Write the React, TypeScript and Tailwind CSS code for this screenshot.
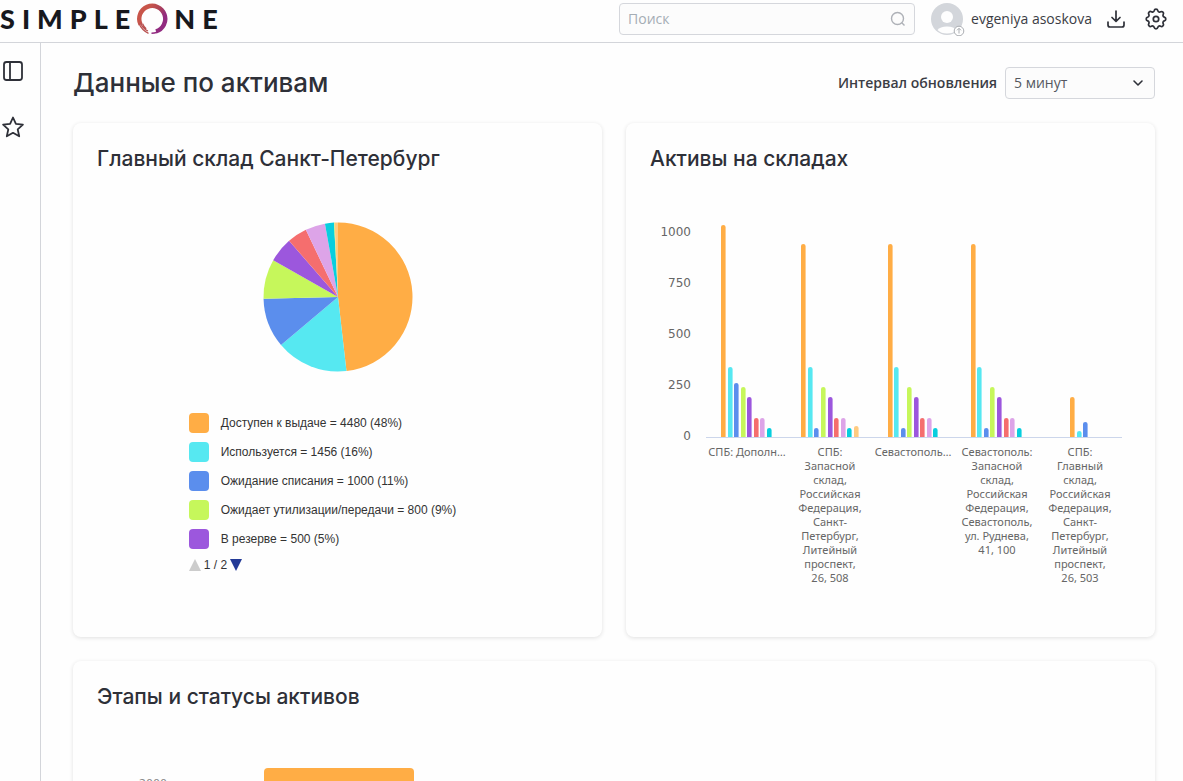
import React from "react";

const ORANGE = "#ffad45";
const CYAN = "#56e8f1";
const BLUE = "#5b8eed";
const LIME = "#c6f75b";
const PURPLE = "#9c57dd";
const RED = "#f56e6e";
const PINK = "#dda4e8";
const TEAL = "#08cede";
const PEACH = "#ffcb80";

const SERIES = [ORANGE, CYAN, BLUE, LIME, PURPLE, RED, PINK, TEAL, PEACH];

const SLICES = [
  { value: 4480, color: ORANGE },
  { value: 1456, color: CYAN },
  { value: 1000, color: BLUE },
  { value: 800, color: LIME },
  { value: 500, color: PURPLE },
  { value: 400, color: RED },
  { value: 400, color: PINK },
  { value: 180, color: TEAL },
  { value: 12, color: LIME },
  { value: 68, color: PEACH },
];

const LEGEND = [
  { text: "Доступен к выдаче = 4480 (48%)", swatch: "bg-[#ffad45]" },
  { text: "Используется = 1456 (16%)", swatch: "bg-[#56e8f1]" },
  { text: "Ожидание списания = 1000 (11%)", swatch: "bg-[#5b8eed]" },
  { text: "Ожидает утилизации/передачи = 800 (9%)", swatch: "bg-[#c6f75b]" },
  { text: "В резерве = 500 (5%)", swatch: "bg-[#9c57dd]" },
];

// Bar x positions and heights are in chart units; the baseline is at y = 253.
const GROUPS = [
  { xs: [71, 78, 84, 91, 97, 104, 110, 117], hs: [212, 70, 54, 50, 40, 19, 19, 9], labelX: 97, lines: ["СПБ: Дополн…"] },
  {
    xs: [151, 158, 164, 171, 178, 184, 191, 197, 204],
    hs: [193, 70, 9, 50, 40, 19, 19, 9, 11],
    labelX: 180,
    lines: ["СПБ:", "Запасной", "склад,", "Российская", "Федерация,", "Санкт-", "Петербург,", "Литейный", "проспект,", "26, 508"],
  },
  { xs: [238, 244, 251, 257, 264, 270, 277, 283], hs: [193, 70, 9, 50, 40, 19, 19, 9], labelX: 263, lines: ["Севастополь…"] },
  {
    xs: [321, 327, 334, 340, 347, 354, 360, 367],
    hs: [193, 70, 9, 50, 40, 19, 19, 9],
    labelX: 347,
    lines: ["Севастополь:", "Запасной", "склад,", "Российская", "Федерация,", "Севастополь,", "ул. Руднева,", "41, 100"],
  },
  {
    xs: [420, 427, 433],
    hs: [40, 6, 15],
    labelX: 430,
    lines: ["СПБ:", "Главный", "склад,", "Российская", "Федерация,", "Санкт-", "Петербург,", "Литейный", "проспект,", "26, 503"],
  },
];

const TICKS = [
  { text: "1000", y: 52 },
  { text: "750", y: 103 },
  { text: "500", y: 154 },
  { text: "250", y: 205 },
  { text: "0", y: 256 },
];

function Pie() {
  const total = SLICES.reduce((sum, s) => sum + s.value, 0);
  const point = (v: number) => {
    const a = (v / total) * Math.PI * 2;
    return `${75 + 74.5 * Math.sin(a)} ${75 - 74.5 * Math.cos(a)}`;
  };
  let start = 0;
  return (
    <svg viewBox="0 0 150 150" className="size-[150px]" role="img" aria-label="Главный склад Санкт-Петербург">
      {SLICES.map((s, i) => {
        const from = start;
        start += s.value;
        const large = s.value / total > 0.5 ? 1 : 0;
        return <path key={i} d={`M75 75L${point(from)}A74.5 74.5 0 ${large} 1 ${point(start)}Z`} fill={s.color} />;
      })}
    </svg>
  );
}

function BarChart() {
  return (
    <svg viewBox="0 0 481 410" className="w-full" role="img" aria-label="Активы на складах">
      <g fill="#666" fontFamily="DejaVu Sans, sans-serif" fontSize="12" textAnchor="end">
        {TICKS.map((t) => (
          <text key={t.text} x="41" y={t.y}>{t.text}</text>
        ))}
      </g>
      {GROUPS.map((g, i) => (
        <g key={i}>
          {g.xs.map((x, j) => (
            <path key={j} d={`M${x} 253v${2 - g.hs[j]}q0-2 2.3-2t2.3 2V253z`} fill={SERIES[j]} />
          ))}
        </g>
      ))}
      <path d="M56 253.5H472" stroke="#ccd6eb" />
      <g fill="#666" fontFamily="Noto Sans, sans-serif" fontSize="11" textAnchor="middle">
        {GROUPS.map((g, i) => (
          <text key={i}>
            {g.lines.map((line, j) => (
              <tspan key={j} x={g.labelX} y={272 + j * 14}>{line}</tspan>
            ))}
          </text>
        ))}
      </g>
    </svg>
  );
}

function Letters({ word }: { word: string }) {
  return (
    <span className="flex gap-[7px] text-[27px] leading-[30px] font-black text-[#17181d]">
      {word.split("").map((c, i) => (
        <span key={i}>{c}</span>
      ))}
    </span>
  );
}

function Logo() {
  return (
    <a href="#" aria-label="SimpleOne" className="flex items-center gap-[6px] font-[Lato,sans-serif]">
      <Letters word="SIMPLE" />
      <svg viewBox="0 0 32 32" className="size-8" fill="none">
        <defs>
          <linearGradient id="ring" x1="0" y1="0.2" x2="1" y2="0.8">
            <stop offset="0.2" stopColor="#c8554a" />
            <stop offset="0.5" stopColor="#b04654" />
            <stop offset="0.8" stopColor="#922b80" />
          </linearGradient>
        </defs>
        <path d="M4.6 21.6A13 13 0 1 1 20 28.3" stroke="url(#ring)" strokeWidth="4.4" />
        <path d="M3 20.5Q6 27.5 12.5 30.3M4.8 20.5Q7 25.8 12 28M6.6 20.8Q7.8 24 10.2 25.8" stroke="#b8504f" strokeWidth="1.3" />
        <path d="M15.5 30.2Q18.5 30.2 21 29.2" stroke="#922b80" strokeWidth="1.6" />
      </svg>
      <Letters word="NE" />
    </a>
  );
}

const card = "rounded-lg bg-[#fefefe] p-6 shadow-[0_1px_4px_rgba(0,0,0,0.12)]";
const cardTitle = "font-[Inter,sans-serif] text-[21px] leading-6 font-medium text-[#2e3038]";

export default function App() {
  return (
    <div className="flex h-screen flex-col bg-[#fefefe] font-['Open_Sans',sans-serif] text-[#3b3d45]">
      <header className="flex h-[43px] shrink-0 items-center justify-between border-b border-[#d3d5da] pr-[14px] pb-1">
        <Logo />
        <div className="flex items-center">
          <label className="flex h-8 w-[296px] items-center rounded border border-[#d5d7dc] bg-[#fcfcfc] px-2">
            <input aria-label="Поиск" placeholder="Поиск" className="min-w-0 flex-1 bg-transparent text-sm outline-none placeholder:text-[#a5adb5]" />
            <svg viewBox="0 0 16 16" className="size-4" fill="none" stroke="#aeb1b7" strokeWidth="1.4">
              <circle cx="7.5" cy="7.5" r="6" />
              <path d="M11.8 11.8L14.5 14.5" />
            </svg>
          </label>
          <button className="ml-4 flex items-center gap-[6px]">
            <svg viewBox="0 0 34 34" className="size-[34px]">
              <circle cx="16" cy="17" r="16" fill="#d3d6db" />
              <circle cx="16" cy="15" r="6" fill="#fefefe" />
              <path d="M6.5 28Q9 24.5 16 24.5T25.5 28Q22 31.5 16 31.5T6.5 28Z" fill="#fefefe" />
              <circle cx="28" cy="29" r="4.8" fill="#fefefe" stroke="#aaadb2" />
              <path d="M28 31.5v-5M26 28.3l2-2 2 2" fill="none" stroke="#aaadb2" />
            </svg>
            <span className="text-sm">evgeniya asoskova</span>
          </button>
          <button aria-label="Загрузки" className="ml-[15px]">
            <svg viewBox="0 0 18 18" className="size-[18px]" fill="none" stroke="#2e3038" strokeWidth="1.7" strokeLinecap="round" strokeLinejoin="round">
              <path d="M9 1v10M5 7.5L9 11.3L13 7.5M1 12v3q0 2 2 2h12q2 0 2-2v-3" />
            </svg>
          </button>
          <button aria-label="Настройки" className="ml-[18px]">
            <svg viewBox="0 0 24 24" className="size-[26px]" fill="none" stroke="#2e3038" strokeWidth="1.6" strokeLinejoin="round">
              <path d="M10.3 4.3c.4-1.8 3-1.8 3.4 0a1.7 1.7 0 0 0 2.6 1.1c1.5-.9 3.3.8 2.4 2.4a1.7 1.7 0 0 0 1 2.5c1.8.5 1.8 3 0 3.4a1.7 1.7 0 0 0-1 2.6c.9 1.5-.9 3.3-2.4 2.4a1.7 1.7 0 0 0-2.6 1c-.4 1.8-3 1.8-3.4 0a1.7 1.7 0 0 0-2.6-1c-1.5.9-3.3-.9-2.4-2.4a1.7 1.7 0 0 0-1-2.6c-1.8-.4-1.8-3 0-3.4a1.7 1.7 0 0 0 1-2.6c-.9-1.5.9-3.3 2.4-2.4 1 .6 2.3.1 2.6-1Z" />
              <circle cx="12" cy="12" r="2.5" />
            </svg>
          </button>
        </div>
      </header>
      <div className="flex min-h-0 flex-1">
        <nav className="flex w-[41px] shrink-0 flex-col gap-8 border-r border-[#d3d5da] pt-4 pl-px">
          <button aria-label="Меню" className="size-6">
            <svg viewBox="0 0 24 24" className="size-6" fill="none" stroke="#2e3038" strokeWidth="1.8">
              <rect x="3" y="3" width="18" height="18" rx="2.5" />
              <path d="M9 3v18" />
            </svg>
          </button>
          <button aria-label="Избранное" className="size-6">
            <svg viewBox="0 0 24 24" className="size-6" fill="none" stroke="#2e3038" strokeWidth="1.8" strokeLinejoin="round">
              <path d="M12 2.5l2.9 6.4 7 .8-5.2 4.7 1.5 6.9L12 17.8l-6.2 3.5 1.5-6.9L2.1 9.7l7-.8z" />
            </svg>
          </button>
        </nav>
        <main className="flex min-w-0 flex-1 flex-col gap-6 overflow-y-auto pt-6 pr-7 pb-6 pl-8 [scrollbar-width:none]">
          <div className="flex items-center justify-between">
            <h1 className="font-[Inter,sans-serif] text-[26px] leading-8 font-medium text-[#2e3038]">Данные по активам</h1>
            <div className="flex items-center gap-2">
              <label htmlFor="interval" className="text-sm font-semibold">Интервал обновления</label>
              <span className="relative flex h-8 w-[150px]">
                <select id="interval" className="w-full appearance-none rounded border border-[#d5d7dc] bg-[#fcfcfc] px-2 text-sm text-[#55585f]">
                  <option>5 минут</option>
                </select>
                <svg viewBox="0 0 12 12" className="pointer-events-none absolute top-[10px] right-[11px] size-3" fill="none" stroke="#2e3038" strokeWidth="1.6" strokeLinecap="round" strokeLinejoin="round">
                  <path d="M2 4l4 4 4-4" />
                </svg>
              </span>
            </div>
          </div>
          <div className="grid shrink-0 grid-cols-2 gap-6">
            <section className={card}>
              <h2 className={cardTitle}>Главный склад Санкт-Петербург</h2>
              <div className="flex flex-col items-center pt-[51px]">
                <Pie />
                <div className="mt-[41px] -ml-[30px] font-['Liberation_Sans',sans-serif] text-xs text-[#333]">
                  <ul className="flex flex-col gap-[9px]">
                    {LEGEND.map((item) => (
                      <li key={item.text} className="flex h-5 items-center gap-3">
                        <span className={`size-5 rounded ${item.swatch}`} />
                        {item.text}
                      </li>
                    ))}
                  </ul>
                  <div className="mt-2 flex items-center gap-[3px]">
                    <button aria-label="Назад">
                      <svg viewBox="0 0 12 12" className="size-3" fill="#ccc"><path d="M6 0l6 12H0z" /></svg>
                    </button>
                    <span>1 / 2</span>
                    <button aria-label="Вперёд">
                      <svg viewBox="0 0 12 12" className="size-3" fill="#233a97"><path d="M0 0h12L6 12z" /></svg>
                    </button>
                  </div>
                </div>
              </div>
            </section>
            <section className={card}>
              <h2 className={cardTitle}>Активы на складах</h2>
              <div className="pt-[13px] pb-[19px]">
                <BarChart />
              </div>
            </section>
          </div>
          <section className={`${card} shrink-0`}>
            <h2 className={cardTitle}>Этапы и статусы активов</h2>
            <svg viewBox="0 0 1034 360" className="mt-4 w-full" role="img" aria-label="Этапы и статусы активов">
              <text x="70" y="62" textAnchor="end" fill="#888" fontFamily="DejaVu Sans, sans-serif" fontSize="11">2000</text>
              <path d="M167 360V47q0-4 4-4h142q4 0 4 4v313z" fill={ORANGE} />
              <path d="M80 359.5h954" stroke="#ccd6eb" />
            </svg>
          </section>
        </main>
      </div>
    </div>
  );
}
